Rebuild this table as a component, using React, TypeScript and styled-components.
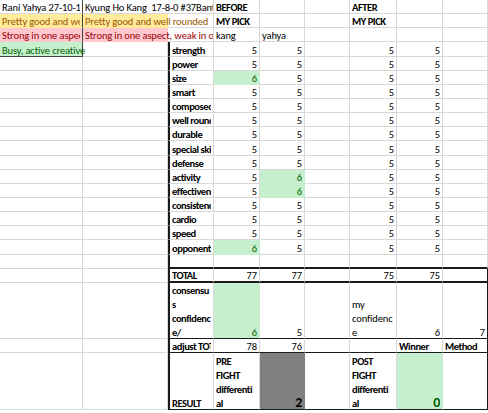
import React from 'react';
import styled, { createGlobalStyle } from 'styled-components';

const Global = createGlobalStyle`
  html, body { margin: 0; padding: 0; background: #fff; }
  body { font-family: Carlito, Lato, "Liberation Sans", sans-serif; }
`;

const COLS = [83, 85, 46, 46, 45, 45, 47, 46, 45];
const ROWS = [...Array(20).fill(14.15), 56, 14, 57];
const GRID = '#d8d8d8';
const DARK = '#1a1a1a';

const YF = '#ffeb9c';
const YT = '#9c5700';
const RF = '#ffc7ce';
const RT = '#9c0006';
const GF = '#c6efce';
const GT = '#006100';
const GRAY = '#808080';

const Sheet = styled.div`
  display: grid;
  grid-template-columns: ${COLS.map((c) => c + 'px').join(' ')};
  grid-template-rows: ${ROWS.map((r) => r + 'px').join(' ')};
  width: 488px;
  height: 413px;
  overflow: hidden;
  background: #fff;
  font-family: Carlito, Lato, sans-serif;
  font-size: 10.5px;
  color: #000;
`;

const Cell = styled.div<{
  $fill?: string;
  $color?: string;
  $bold?: boolean;
  $align?: 'left' | 'right';
  $bl: string;
  $br: string;
  $bb: string;
  $overflow?: boolean;
}>`
  box-sizing: border-box;
  min-width: 0;
  display: flex;
  flex-direction: column;
  justify-content: flex-end;
  padding: 0 2px 0 2px;
  background: ${(p) => p.$fill ?? 'transparent'};
  color: ${(p) => p.$color ?? '#000'};
  font-weight: ${(p) => (p.$bold ? 700 : 400)};
  letter-spacing: ${(p) => (p.$bold ? '-0.45px' : '-0.12px')};
  text-align: ${(p) => p.$align ?? 'left'};
  border-left: ${(p) => p.$bl};
  border-right: ${(p) => p.$br};
  border-bottom: ${(p) => p.$bb};
  overflow: ${(p) => (p.$overflow ? 'visible' : 'hidden')};
  white-space: pre;
`;

const Text = styled.div<{ $extra?: number; $big?: boolean }>`
  width: ${(p) => (p.$extra ? `calc(100% + ${p.$extra}px)` : 'auto')};
  overflow: hidden;
  font-size: ${(p) => (p.$big ? '14px' : 'inherit')};
  line-height: ${(p) => (p.$big ? '14px' : '13px')};
  margin-bottom: -1px;
`;

const Stack = styled.div`
  margin-bottom: -2px;
`;

const Line = styled.div`
  line-height: 14px;
  overflow: hidden;
`;

type Def = {
  t?: string | string[];
  b?: boolean;
  r?: boolean;
  fill?: string;
  color?: string;
  span?: number;
  big?: boolean;
};

const E: Def = {};
const n = (v: string, extra: Partial<Def> = {}): Def => ({ t: v, r: true, ...extra });
const green = (v: string): Def => n(v, { fill: GF, color: GT });
const lbl = (v: string): Def => ({ t: v, b: true });

const stat = (label: string, d = '5', e = '5'): Def[] => [
  E,
  E,
  lbl(label),
  d === '6' ? green(d) : n(d),
  e === '6' ? green(e) : n(e),
  E,
  n('5'),
  n('5'),
  E,
];

const DATA: Def[][] = [
  [
    { t: 'Rani Yahya 27-10-1' },
    { t: 'Kyung Ho Kang  17-8-0 #37Bantamweight', span: 1 },
    E,
    lbl('BEFORE'),
    E,
    E,
    lbl('AFTER'),
    E,
    E,
  ],
  [
    { t: 'Pretty good and well rounded', fill: YF, color: YT },
    { t: 'Pretty good and well rounded', fill: YF, color: YT, span: 1 },
    E,
    lbl('MY PICK'),
    E,
    E,
    lbl('MY PICK'),
    E,
    E,
  ],
  [
    { t: 'Strong in one aspect, weak in others', fill: RF, color: RT },
    { t: 'Strong in one aspect, weak in others', fill: RF, color: RT, span: 1 },
    E,
    { t: 'kang' },
    { t: 'yahya' },
    E,
    E,
    E,
    E,
  ],
  (() => {
    const row = stat('strength');
    row[0] = { t: 'Busy, active creative', fill: GF, color: GT, span: 1 };
    return row;
  })(),
  stat('power'),
  stat('size', '6'),
  stat('smart'),
  stat('composed'),
  stat('well rounded'),
  stat('durable'),
  stat('special skills'),
  stat('defense'),
  stat('activity', '5', '6'),
  stat('effectiveness', '5', '6'),
  stat('consistency'),
  stat('cardio'),
  stat('speed'),
  stat('opponent', '6'),
  [E, E, E, E, E, E, E, E, E],
  [E, E, lbl('TOTAL'), n('77'), n('77'), E, n('75'), n('75'), E],
  [
    E,
    E,
    { t: ['consensu', 's', 'confidenc', 'e/'], b: true },
    green('6'),
    n('5'),
    E,
    { t: ['my', 'confidenc', 'e'] },
    n('6'),
    n('7'),
  ],
  [E, E, lbl('adjust TOTAL'), n('78'), n('76'), E, E, lbl('Winner'), lbl('Method')],
  [
    E,
    E,
    lbl('RESULT'),
    { t: ['PRE', 'FIGHT', 'differenti', 'al'], b: true },
    { t: '2', r: true, b: true, big: true, fill: GRAY },
    E,
    { t: ['POST', 'FIGHT', 'differenti', 'al'], b: true },
    { t: '0', r: true, b: true, big: true, fill: GF, color: GT },
    E,
  ],
];

function borders(r: number, c: number, d: Def) {
  const grid = `1px solid ${d.fill ?? GRID}`;
  let bl = 'none';
  let br = grid;
  let bb = grid;
  if (c === 0 && r <= 3) br = `1px solid #444`;
  if (c === 0 && r === 3) bb = `1px solid #444`;
  if (c === 1 && r <= 2) br = 'none';
  if (c === 2 && r >= 3) bl = `2px solid ${DARK}`;
  if (c >= 2) {
    if (r === 18 || r === 19) bb = `2px solid ${DARK}`;
    if (r === 20) bb = `1.5px solid ${DARK}`;
    if (r === 21 || r === 22) bb = `1px solid ${DARK}`;
  }
  if (c === 8 && r >= 19) br = `1px solid ${DARK}`;
  return { bl, br, bb };
}

function extraFor(c: number, span?: number) {
  if (!span) return 0;
  let w = 0;
  for (let i = c + 1; i <= c + span && i < COLS.length; i++) w += COLS[i];
  return w + 2;
}

export default function App() {
  return (
    <>
      <Global />
      <Sheet>
        {DATA.map((row, r) =>
          row.map((d, c) => {
            const { bl, br, bb } = borders(r, c, d);
            return (
              <Cell
                key={`${r}-${c}`}
                $fill={d.fill}
                $color={d.color}
                $bold={d.b}
                $align={d.r ? 'right' : 'left'}
                $bl={bl}
                $br={br}
                $bb={bb}
                $overflow={!!d.span}
              >
                {Array.isArray(d.t) ? (
                  <Stack>
                    {d.t.map((l, i) => (
                      <Line key={i}>{l}</Line>
                    ))}
                  </Stack>
                ) : d.t ? (
                  <Text $extra={extraFor(c, d.span)} $big={d.big}>
                    {d.t}
                  </Text>
                ) : null}
              </Cell>
            );
          })
        )}
      </Sheet>
    </>
  );
}
